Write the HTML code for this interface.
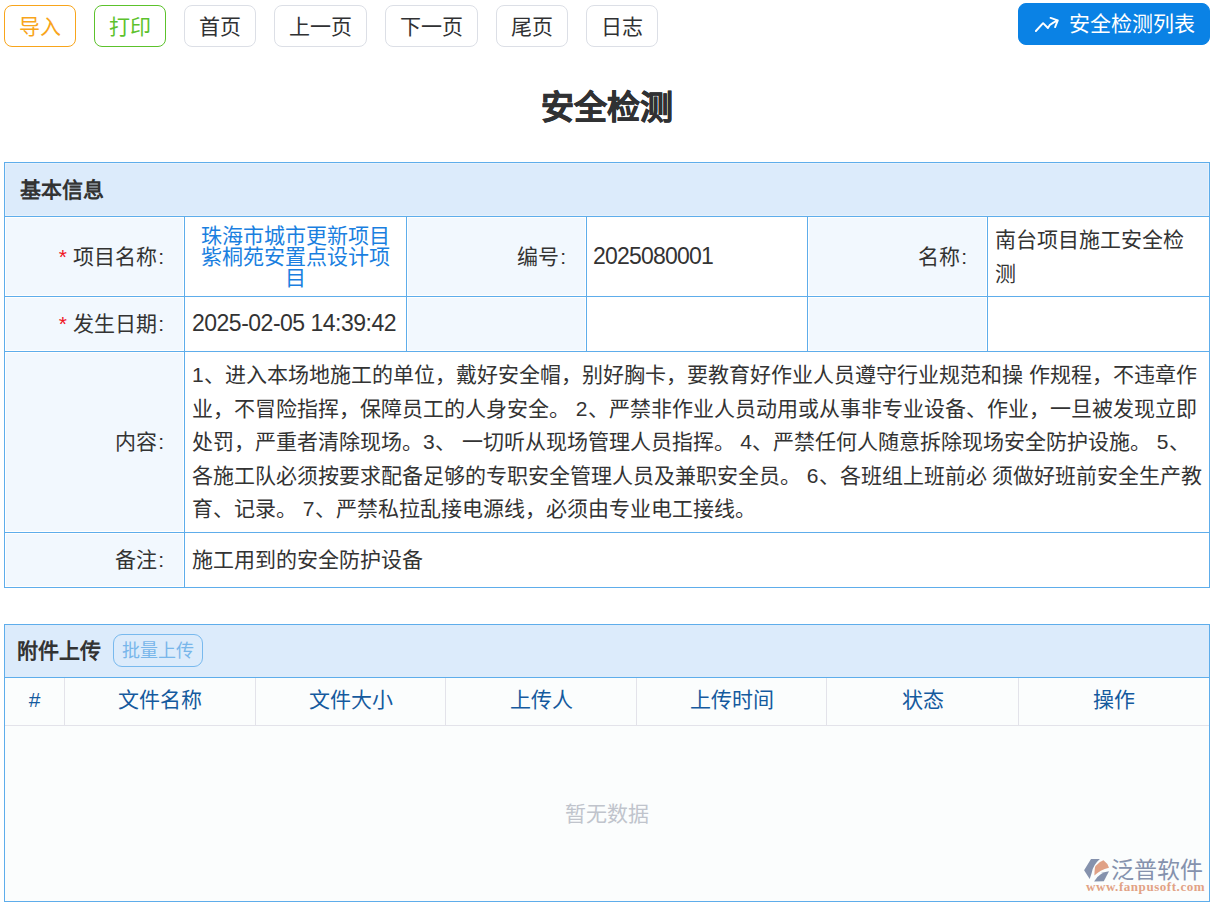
<!DOCTYPE html>
<html lang="zh-CN"><head><meta charset="utf-8">
<style>
*{margin:0;padding:0;box-sizing:border-box}
html,body{width:1214px;height:903px;background:#fff;overflow:hidden}
body{font-family:"Liberation Sans",sans-serif;color:#333;font-size:21px;position:relative}
.abs{position:absolute}
.btn{position:absolute;top:5px;height:42px;border:1px solid #dcdfe6;border-radius:8px;background:#fff;color:#303133;font-size:21px;line-height:42px;text-align:center;white-space:nowrap}
.b-imp{border-color:#f8a51b;color:#f8a51b}
.b-prt{border-color:#5cc22c;color:#5cc22c}
.b-list{top:3px;left:1018px;width:192px;height:42px;background:#0a82e5;border-color:#0a82e5;color:#fff}
h1{position:absolute;left:0;width:1214px;top:86px;text-align:center;font-size:33px;font-weight:bold;-webkit-text-stroke:0.6px #303133;line-height:44px;color:#303133}
.t{position:absolute;background:#5eadeb}
.cell{position:absolute;box-shadow:inset 0 0 0 1px #fff}
.lab{background:#f2f8fe}
.txt{position:absolute;white-space:nowrap;line-height:21px}
.req{color:#f0141e}
.c{font-style:normal;margin-left:1.5px}
.num{font-size:23px;letter-spacing:-0.5px}
</style></head><body>
<div class="btn b-imp" style="left:4px;width:72px">导入</div>
<div class="btn b-prt" style="left:94px;width:72px">打印</div>
<div class="btn" style="left:184px;width:72px">首页</div>
<div class="btn" style="left:274px;width:93px">上一页</div>
<div class="btn" style="left:385px;width:93px">下一页</div>
<div class="btn" style="left:496px;width:72px">尾页</div>
<div class="btn" style="left:586px;width:72px">日志</div>
<div class="btn b-list"><svg class="abs" style="left:16px;top:13px" width="26" height="17" viewBox="0 0 26 17"><path d="M0.9 14 L8.1 6.2 L12.9 11 L14.8 8 Q18 5.6 22.6 3.4 M15.6 0.9 L22.8 3.3 L20.1 10.1" fill="none" stroke="#fff" stroke-width="1.9" stroke-linecap="round" stroke-linejoin="round"/></svg><span class="abs" style="left:50px;top:-1px">安全检测列表</span></div>

<h1>安全检测</h1>

<!-- table 1 -->
<div class="cell" style="left:5px;top:163px;width:1204px;height:53px;background:#dcebfb;box-shadow:inset 0 0 0 1px #e6f1fc"></div>
<div class="cell lab" style="left:5px;top:217px;width:179px;height:79px"></div>
<div class="cell lab" style="left:407px;top:217px;width:179px;height:79px"></div>
<div class="cell lab" style="left:808px;top:217px;width:179px;height:79px"></div>
<div class="cell lab" style="left:5px;top:297px;width:179px;height:54px"></div>
<div class="cell lab" style="left:407px;top:297px;width:179px;height:54px"></div>
<div class="cell lab" style="left:808px;top:297px;width:179px;height:54px"></div>
<div class="cell lab" style="left:5px;top:352px;width:179px;height:180px"></div>
<div class="cell lab" style="left:5px;top:533px;width:179px;height:54px"></div>
<!-- borders -->
<div class="t" style="left:4px;top:162px;width:1206px;height:1px"></div>
<div class="t" style="left:4px;top:216px;width:1206px;height:1px"></div>
<div class="t" style="left:4px;top:296px;width:1206px;height:1px"></div>
<div class="t" style="left:4px;top:351px;width:1206px;height:1px"></div>
<div class="t" style="left:4px;top:532px;width:1206px;height:1px"></div>
<div class="t" style="left:4px;top:587px;width:1206px;height:1px"></div>
<div class="t" style="left:4px;top:162px;width:1px;height:426px"></div>
<div class="t" style="left:1209px;top:162px;width:1px;height:426px"></div>
<div class="t" style="left:184px;top:216px;width:1px;height:372px"></div>
<div class="t" style="left:406px;top:216px;width:1px;height:136px"></div>
<div class="t" style="left:586px;top:216px;width:1px;height:136px"></div>
<div class="t" style="left:807px;top:216px;width:1px;height:136px"></div>
<div class="t" style="left:987px;top:216px;width:1px;height:136px"></div>

<div class="txt" style="left:20px;top:179px;font-weight:bold">基本信息</div>

<div class="txt" style="right:1050px;top:246px"><span class="req">*</span> 项目名称<i class="c">:</i></div>
<div class="txt" style="left:185px;width:221px;top:225px;text-align:center;white-space:normal;color:#1a7fe0;padding:0 6px">珠海市城市更新项目紫桐苑安置点设计项目</div>
<div class="txt" style="right:648px;top:246px">编号<i class="c">:</i></div>
<div class="txt" style="left:593px;top:246px"><span class="num" style="letter-spacing:-0.8px">2025080001</span></div>
<div class="txt" style="right:247px;top:246px">名称<i class="c">:</i></div>
<div class="txt" style="left:995px;top:223px;line-height:34px">南台项目施工安全检<br>测</div>

<div class="txt" style="right:1050px;top:313px"><span class="req">*</span> 发生日期<i class="c">:</i></div>
<div class="txt" style="left:192px;top:313px"><span class="num">2025-02-05 14:39:42</span></div>

<div class="txt" style="right:1050px;top:431px">内容<i class="c">:</i></div>
<div class="txt" style="left:192px;top:358px;line-height:33.6px">1、进入本场地施工的单位，戴好安全帽，别好胸卡，要教育好作业人员遵守行业规范和操 作规程，不违章作<br>业，不冒险指挥，保障员工的人身安全。 2、严禁非作业人员动用或从事非专业设备、作业，一旦被发现立即<br>处罚，严重者清除现场。3、 一切听从现场管理人员指挥。 4、严禁任何人随意拆除现场安全防护设施。 5、<br>各施工队必须按要求配备足够的专职安全管理人员及兼职安全员。 6、各班组上班前必 须做好班前安全生产教<br>育、记录。 7、严禁私拉乱接电源线，必须由专业电工接线。</div>

<div class="txt" style="right:1050px;top:549px">备注<i class="c">:</i></div>
<div class="txt" style="left:192px;top:549px">施工用到的安全防护设备</div>

<!-- table 2 -->
<div class="abs" style="left:5px;top:625px;width:1204px;height:52px;background:#dcebfb"></div>
<div class="abs" style="left:5px;top:678px;width:1204px;height:223px;background:#fbfdfd"></div>
<div class="t" style="left:4px;top:624px;width:1206px;height:1px"></div>
<div class="t" style="left:4px;top:677px;width:1206px;height:1px"></div>
<div class="t" style="left:4px;top:901px;width:1206px;height:1px"></div>
<div class="t" style="left:4px;top:624px;width:1px;height:278px"></div>
<div class="t" style="left:1209px;top:624px;width:1px;height:278px"></div>
<div class="abs" style="left:5px;top:725px;width:1204px;height:1px;background:#e3e3ea"></div>
<div class="abs" style="left:64px;top:678px;width:1px;height:47px;background:#e3e3ea"></div>
<div class="abs" style="left:255px;top:678px;width:1px;height:47px;background:#e3e3ea"></div>
<div class="abs" style="left:445px;top:678px;width:1px;height:47px;background:#e3e3ea"></div>
<div class="abs" style="left:636px;top:678px;width:1px;height:47px;background:#e3e3ea"></div>
<div class="abs" style="left:826px;top:678px;width:1px;height:47px;background:#e3e3ea"></div>
<div class="abs" style="left:1018px;top:678px;width:1px;height:47px;background:#e3e3ea"></div>

<div class="txt" style="left:17px;top:640px;font-weight:bold">附件上传</div>
<div class="abs" style="left:113px;top:634px;width:90px;height:33px;border:1px solid #78b9ee;border-radius:9px;color:#78b6ea;font-size:18px;line-height:33px;text-align:center">批量上传</div>

<div class="txt" style="left:5px;width:59px;text-align:center;top:689px;color:#155a9e">#</div>
<div class="txt" style="left:65px;width:190px;text-align:center;top:689px;color:#155a9e">文件名称</div>
<div class="txt" style="left:256px;width:189px;text-align:center;top:689px;color:#155a9e">文件大小</div>
<div class="txt" style="left:446px;width:190px;text-align:center;top:689px;color:#155a9e">上传人</div>
<div class="txt" style="left:637px;width:189px;text-align:center;top:689px;color:#155a9e">上传时间</div>
<div class="txt" style="left:827px;width:191px;text-align:center;top:689px;color:#155a9e">状态</div>
<div class="txt" style="left:1019px;width:190px;text-align:center;top:689px;color:#155a9e">操作</div>

<div class="txt" style="left:5px;width:1204px;text-align:center;top:803px;color:#c0c4cc">暂无数据</div>

<!-- logo -->
<svg class="abs" style="left:1080px;top:855px" width="34" height="30" viewBox="0 0 34 30">
<path d="M11 4.1 L19.9 4.1 Q13 10 11.6 18.2 L9.7 24 L4.1 15.2 Z" fill="#8592ad"/>
<path d="M23.5 5.2 Q27.5 8 29 12.7 Q20 15 14.4 20.5 Q14.5 13 15.5 11 Q19 6.5 23.5 5.2 Z" fill="#e0a186"/>
<path d="M14.1 26.5 L23.8 26.3 L29 16.3 Q19 17.5 14.1 26.5 Z" fill="#8592ad"/>
</svg>
<div class="txt" style="left:1111px;top:858px;font-size:23px;line-height:25px;color:#8592ad">泛普软件</div>
<div class="txt" style="left:1086px;top:880px;font-family:'Liberation Serif',serif;font-size:13px;line-height:14px;color:#e2a285;font-weight:bold;letter-spacing:0.55px">www.fanpusoft.com</div>
</body></html>
